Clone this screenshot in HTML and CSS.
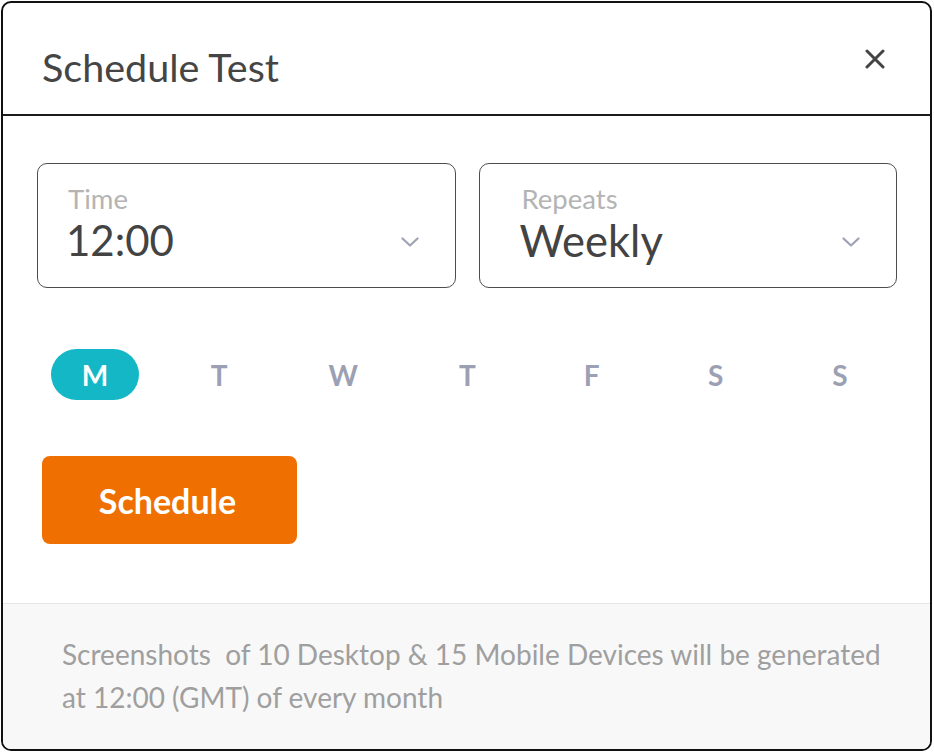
FILE: index.html
```html
<!DOCTYPE html>
<html lang="en">
<head>
<meta charset="utf-8">
<title>Schedule Test</title>
<link rel="stylesheet" href="styles.css">
</head>
<body>
<div class="modal">
  <div class="modal-header">
    <h1 class="modal-title">Schedule Test</h1>
    <button class="close-btn" aria-label="Close">
      <svg width="20" height="20" viewBox="0 0 20 20"><path d="M2 2 L18 18 M18 2 L2 18" stroke="#444" stroke-width="3" stroke-linecap="round" fill="none"/></svg>
    </button>
  </div>
  <div class="modal-body">
    <div class="fields">
      <div class="field field-time">
        <div class="field-label">Time</div>
        <div class="field-row">
          <span class="field-value">12:00</span>
          <svg class="chevron" width="18" height="10" viewBox="0 0 18 10"><polyline points="1.5,1.5 9,8.5 16.5,1.5" stroke="#9ea3b4" stroke-width="2.2" fill="none" stroke-linecap="round" stroke-linejoin="round"/></svg>
        </div>
      </div>
      <div class="field field-repeats">
        <div class="field-label">Repeats</div>
        <div class="field-row">
          <span class="field-value">Weekly</span>
          <svg class="chevron" width="18" height="10" viewBox="0 0 18 10"><polyline points="1.5,1.5 9,8.5 16.5,1.5" stroke="#9ea3b4" stroke-width="2.2" fill="none" stroke-linecap="round" stroke-linejoin="round"/></svg>
        </div>
      </div>
    </div>
    <div class="days">
      <span class="day active">M</span>
      <span class="day">T</span>
      <span class="day">W</span>
      <span class="day">T</span>
      <span class="day">F</span>
      <span class="day">S</span>
      <span class="day">S</span>
    </div>
    <button class="schedule-btn">Schedule</button>
  </div>
  <div class="modal-footer">
    <p class="footer-text">Screenshots&nbsp; of 10 Desktop &amp; 15 Mobile Devices will be generated at 12:00 (GMT) of every month</p>
  </div>
</div>
</body>
</html>
```

FILE: styles.css
```css
* { box-sizing: border-box; }
html, body { margin: 0; padding: 0; background: #ffffff; }
body {
  font-family: Lato, "Open Sans", Arial, sans-serif;
  width: 934px;
  height: 752px;
  overflow: hidden;
}
.modal {
  margin: 1px 0 0 1px;
  width: 931px;
  height: 750px;
  border: 2px solid #111;
  border-radius: 10px;
  overflow: hidden;
  display: flex;
  flex-direction: column;
  background: #fff;
}
.modal-header {
  height: 113px;
  flex: none;
  border-bottom: 2px solid #1c1c1c;
  display: flex;
  align-items: center;
  justify-content: space-between;
  padding: 0 45px 0 39px;
}
.modal-title {
  margin: 16px 0 0 0;
  font-size: 39.5px;
  font-weight: 400;
  color: #454545;
  line-height: 44px;
}
.close-btn {
  border: none;
  background: none;
  padding: 0;
  width: 20px;
  height: 20px;
  display: flex;
  cursor: pointer;
}
.modal-body {
  flex: 1;
  padding: 47px 33px 0 34px;
}
.fields {
  display: grid;
  grid-template-columns: 1fr 1fr;
  gap: 23px;
}
.field {
  min-width: 0;
  height: 125px;
  border: 1px solid #4d4d4d;
  border-radius: 10px;
  padding: 20px 36px 0 30px;
}
.field-repeats {
  padding-left: 42px;
}
.field-label {
  font-size: 27.5px;
  line-height: 30px;
  color: #b4b4b4;
}
.field-row {
  display: flex;
  align-items: center;
  justify-content: space-between;
  margin-top: 2px;
  margin-left: -2px;
}
.field-value {
  font-size: 42px;
  line-height: 48px;
  color: #434343;
}
.field-repeats .field-value {
  font-size: 43.5px;
}
.chevron { display: block; margin-top: 4px; flex: none; }
.days {
  margin-top: 61px;
  display: flex;
  justify-content: space-between;
  padding: 0 13px 0 14px;
}
.day {
  width: 88px;
  height: 51px;
  border-radius: 26px;
  display: flex;
  align-items: center;
  justify-content: center;
  font-size: 28px;
  font-weight: 700;
  color: #9ba0b4;
}
.day.active {
  background: #13b7c5;
  color: #ffffff;
}
.schedule-btn {
  margin: 56px 0 0 5px;
  width: 255px;
  height: 88px;
  border: none;
  border-radius: 8px;
  background: #ef6f00;
  color: #ffffff;
  font-family: Lato, "Open Sans", Arial, sans-serif;
  font-size: 34px;
  font-weight: 700;
  display: flex;
  align-items: center;
  justify-content: center;
  padding: 0 4px 0 0;
  cursor: pointer;
}
.modal-footer {
  flex: none;
  height: 146px;
  border-top: 1px solid #e6e6e6;
  background: #f8f8f8;
  padding: 29px 30px 0 59px;
}
.footer-text {
  margin: 0;
  font-size: 28px;
  line-height: 43px;
  color: #9f9f9f;
}
```
